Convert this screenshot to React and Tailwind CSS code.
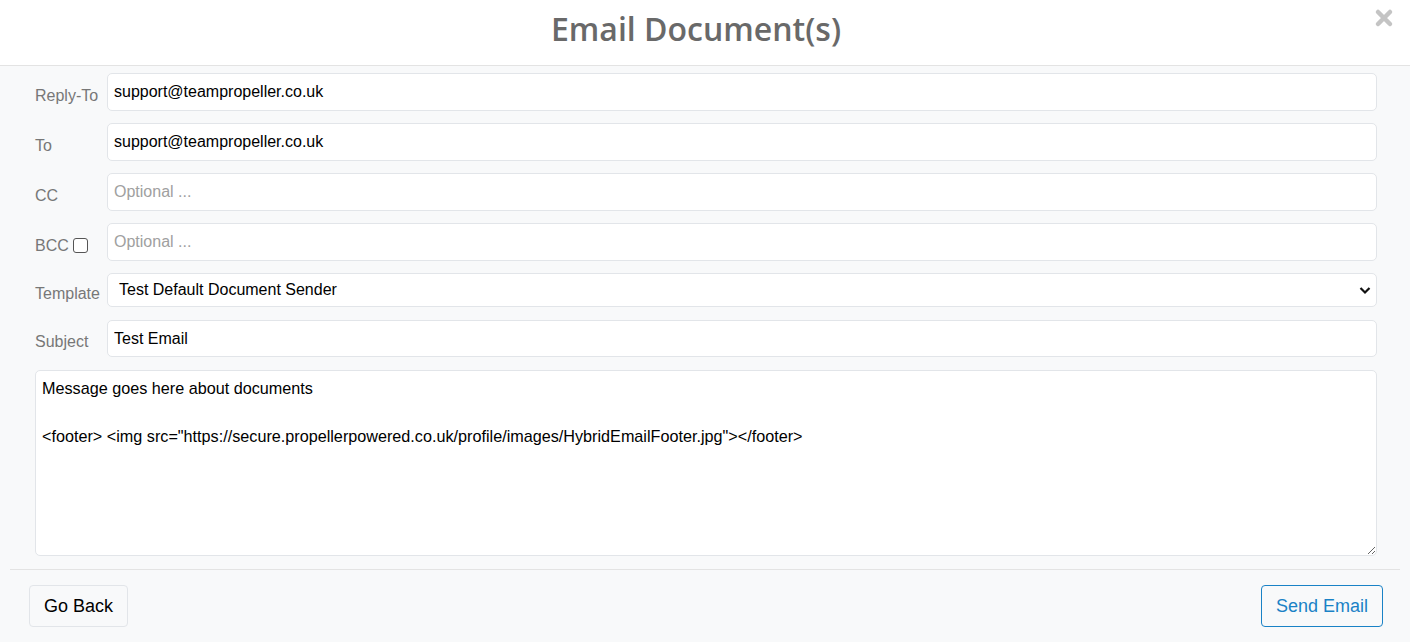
import React from 'react';

const fields = [
  { label: 'Reply-To', value: 'support@teampropeller.co.uk' },
  { label: 'To', value: 'support@teampropeller.co.uk' },
  { label: 'CC', placeholder: 'Optional ...' },
  { label: 'BCC', placeholder: 'Optional ...', checkbox: true },
];

const App = () => {
  return (
    <div className="w-[1410px] h-[642px] bg-[#f8f9fa] font-['Liberation_Sans',Arial,sans-serif] text-[16px] text-black overflow-hidden">
      {/* Header */}
      <div className="relative h-[66px] bg-white border-b border-[#e3e3e3] flex items-center justify-center">
        <h1 className="font-['Open_Sans',sans-serif] font-semibold text-[32px] text-[#696969] leading-none pb-[8px] pr-[18px]">
          Email Document(s)
        </h1>
        <button className="absolute right-[16px] top-[8px] text-[#c4c4c4]">
          <svg width="20" height="20" viewBox="0 0 20 20">
            <path d="M4 4 L16 16 M16 4 L4 16" stroke="currentColor" strokeWidth="4.5" strokeLinecap="round" />
          </svg>
        </button>
      </div>

      {/* Body */}
      <div className="pl-[35px] pr-[33px] pt-[7px]">
        {fields.map((f) => (
          <div key={f.label} className="flex items-center mb-[12px]">
            <label className="w-[72px] pt-[7px] text-[#777] flex items-center">
              {f.label}
              {f.checkbox && (
                <span className="ml-[4px] inline-block w-[15px] h-[15px] border border-[#555] rounded-[3px] bg-white"></span>
              )}
            </label>
            <input
              className="flex-1 h-[38px] bg-white border border-[#e2e5e9] rounded-[5px] px-[6px] outline-none placeholder:text-[#a0a0a0]"
              defaultValue={f.value}
              placeholder={f.placeholder}
            />
          </div>
        ))}
        <div className="flex items-center mb-[13px]">
          <label className="w-[72px] pt-[7px] text-[#777]">Template</label>
          <div className="flex-1 h-[34px] bg-white border border-[#e2e5e9] rounded-[5px] pl-[11px] pr-[4px] flex items-center justify-between">
            <span>Test Default Document Sender</span>
            <svg width="14" height="14" viewBox="0 0 14 14">
              <path d="M2.5 5 L7 9.5 L11.5 5" stroke="#111" strokeWidth="2.2" fill="none" />
            </svg>
          </div>
        </div>
        <div className="flex items-center mb-[13px]">
          <label className="w-[72px] pt-[7px] text-[#777]">Subject</label>
          <input
            className="flex-1 h-[37px] bg-white border border-[#e2e5e9] rounded-[5px] px-[6px] outline-none"
            defaultValue="Test Email"
          />
        </div>
        <textarea
          className="block w-full h-[186px] bg-white border border-[#e2e5e9] rounded-[5px] px-[6px] py-[5px] outline-none leading-[24px] text-[16.2px]"
          defaultValue={'Message goes here about documents\n\n<footer> <img src="https://secure.propellerpowered.co.uk/profile/images/HybridEmailFooter.jpg"></footer>'}
        />
      </div>

      {/* Footer */}
      <div className="mx-[10px] mt-[13px] border-t border-[#e3e3e3] pl-[19px] pr-[17px] pt-[15px] flex justify-between">
        <button className="h-[42px] px-[14px] border border-[#e2e5e9] rounded-[4px] text-[18px] bg-[#f8f9fa]">
          Go Back
        </button>
        <button className="h-[42px] px-[14px] border border-[#1a82c6] rounded-[4px] text-[18px] text-[#1a82c6] bg-transparent">
          Send Email
        </button>
      </div>
    </div>
  );
};

export default App;
